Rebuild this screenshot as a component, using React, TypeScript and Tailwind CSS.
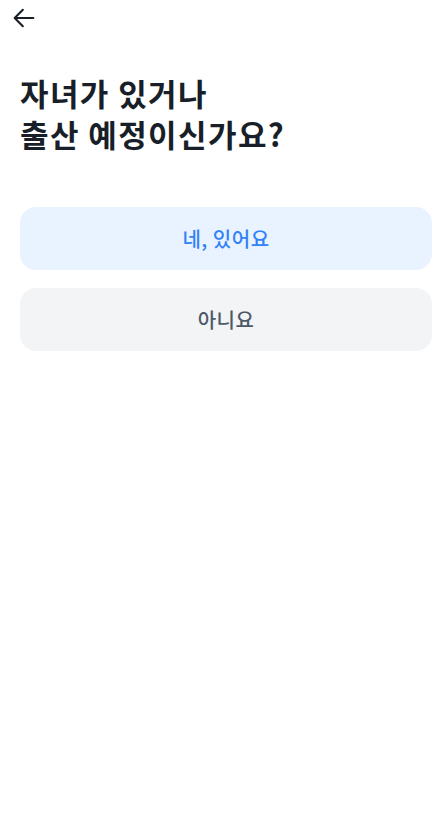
import React from 'react';

const BackIcon = () => (
  <svg className="h-7 w-7" fill="none" viewBox="0 0 24 24" stroke="currentColor">
    <path strokeLinecap="round" strokeLinejoin="round" strokeWidth={1.8} d="M20 12H4m7 7-7-7 7-7" />
  </svg>
);

export default function App() {
  return (
    <div
      className="min-h-[840px] w-full bg-white text-[#191f28]"
      style={{ fontFamily: '"Noto Sans CJK KR", "Noto Sans", sans-serif' }}
    >
      {/* top bar */}
      <header className="flex h-9 items-center px-[10px]">
        <button type="button" className="text-[#191f28]" aria-label="뒤로가기">
          <BackIcon />
        </button>
      </header>

      <main className="pl-5 pr-[15px]">
        <h1 className="mt-[36px] flex flex-col text-[31px] font-bold leading-[41px] tracking-[1.4px]">
          <span>자녀가 있거나</span>
          <span>출산 예정이신가요?</span>
        </h1>

        <div className="mt-[53px] flex flex-col gap-[18px]">
          <button
            type="button"
            className="flex h-[63px] w-full items-center justify-center rounded-2xl bg-[#e8f3ff] text-[20px] font-medium tracking-[0.5px] text-[#3182f6]"
          >
            네, 있어요
          </button>
          <button
            type="button"
            className="flex h-[63px] w-full items-center justify-center rounded-2xl bg-[#f2f4f6] text-[20px] font-medium tracking-[0.5px] text-[#4e5968]"
          >
            아니요
          </button>
        </div>
      </main>
    </div>
  );
}
